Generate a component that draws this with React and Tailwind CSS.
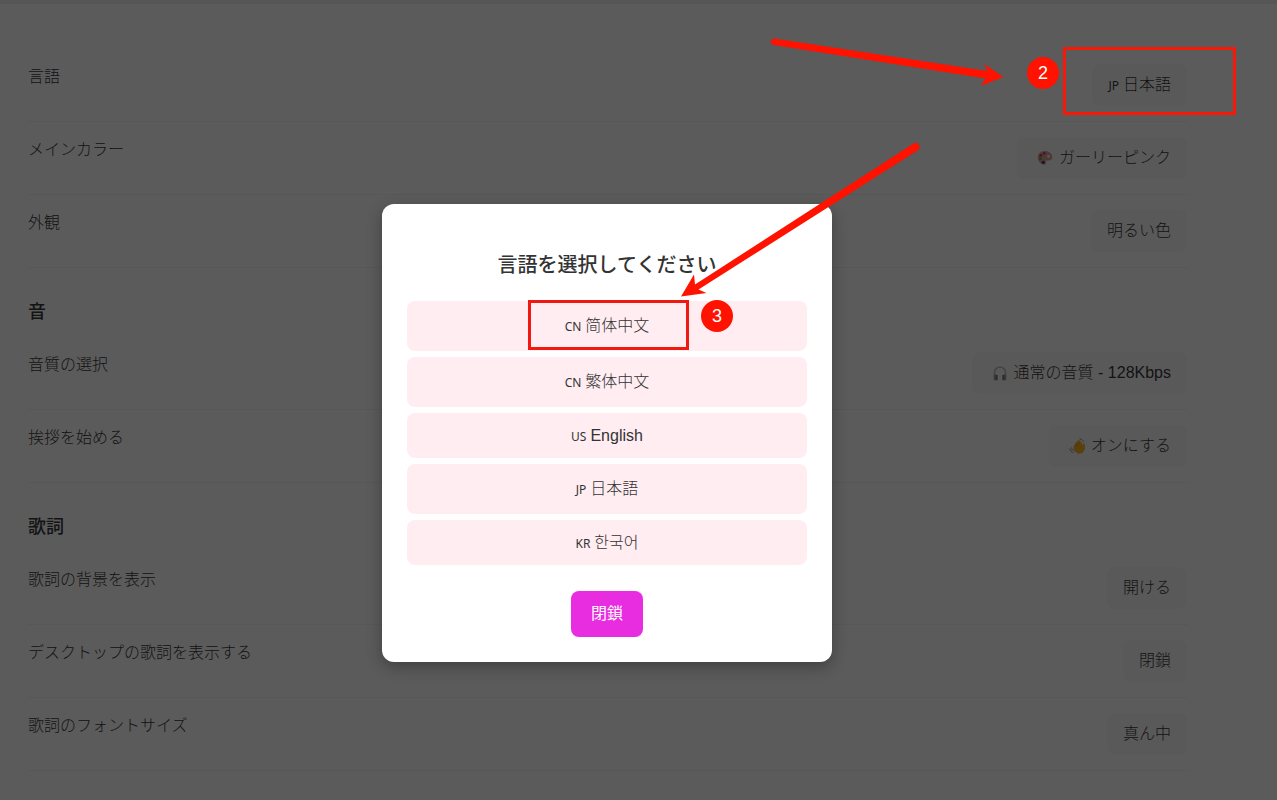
import React, { useState } from 'react';

const PaletteIcon = () => (
    <svg viewBox="0 0 16 16" className="w-4 h-4" aria-hidden="true">
        <path d="M8 1C3.600 1 .8 3.900 .8 7.600c0 4 3 7.200 6.400 7.200 1.700 0 2-1 1.600-2.200-.4-1.300.3-2.400 1.800-2.200 2.600.3 4.700-.6 4.700-3.200C15.300 3.600 12 1 8 1z" fill="#c98f85" />
        <circle cx="11.600" cy="6.500" r="1.400" fill="#e8d5d0" />
        <circle cx="7.200" cy="3.400" r="1.400" fill="#5a4fc0" />
        <circle cx="3.800" cy="5.400" r="1.400" fill="#d02424" />
        <circle cx="3.400" cy="8.800" r="1.400" fill="#2c9a50" />
        <circle cx="6.300" cy="12.200" r="1.500" fill="#2b2c8c" />
    </svg>
);

const HeadphonesIcon = () => (
    <svg viewBox="0 0 16 16" className="w-4 h-4" aria-hidden="true">
        <path d="M2.500 11V7.500a5.500 5.500 0 0 1 11 0V11" fill="none" stroke="#a5a5a5" strokeWidth="1.500" />
        <rect x="1.800" y="9.500" width="3.200" height="6" rx="1.300" fill="#8a8a8a" />
        <rect x="11" y="9.500" width="3.200" height="6" rx="1.300" fill="#8a8a8a" />
        <path d="M5 10v5M11 10v5" stroke="#4a4a4a" strokeWidth="1" />
    </svg>
);

const WaveIcon = () => (
    <svg viewBox="0 0 16 16" className="w-4 h-4" aria-hidden="true">
        <path
            d="M5.500 8.500 8 4.500M7 8l2.600-5M9 8l2-4.500M11 8l1.400-3M14.800 6v5"
            fill="none"
            stroke="#e0a020"
            strokeWidth="1.700"
            strokeLinecap="round"
        />
        <path d="M4.500 8.500 12 6l2 1 1.600.500V12l-2.400 3.300-4.200.4-3.800-3z" fill="#e0a020" />
        <path d="M7 8.500 8.800 5M9 8.500l1.600-4" stroke="#b07812" strokeWidth=".5" />
        <path d="M.8 10.500c.3 2.200 1.600 3.700 3.700 4M2.500 9.500c.2 1.500.9 2.400 2.200 3M10.500.8c2 .1 3.400 1.200 4 3" fill="none" stroke="#777" strokeWidth=".9" />
    </svg>
);

const CountryCode = ({ children }) => (
    <span className="font-['Noto_Sans'] font-normal text-xs mr-1">{children}</span>
);

const sections = [
    {
        rows: [
            { label: '言語', value: '日本語', code: 'JP' },
            { label: 'メインカラー', value: 'ガーリーピンク', icon: <PaletteIcon /> },
            { label: '外観', value: '明るい色' },
        ],
    },
    {
        title: '音',
        rows: [
            { label: '音質の選択', value: '通常の音質 - 128Kbps', icon: <HeadphonesIcon /> },
            { label: '挨拶を始める', value: 'オンにする', icon: <WaveIcon /> },
        ],
    },
    {
        title: '歌詞',
        rows: [
            { label: '歌詞の背景を表示', value: '開ける' },
            { label: 'デスクトップの歌詞を表示する', value: '閉鎖' },
            { label: '歌詞のフォントサイズ', value: '真ん中' },
        ],
    },
];

const languages = [
    { code: 'CN', name: '简体中文', height: 'h-[50px]' },
    { code: 'CN', name: '繁体中文', height: 'h-[50px]' },
    { code: 'US', name: 'English', height: 'h-[45px]' },
    { code: 'JP', name: '日本語', height: 'h-[50px]' },
    { code: 'KR', name: '한국어', height: 'h-[45px]' },
];

function SettingRow({ row, onClick }) {
    return (
        <div className="flex items-start justify-between py-[15px] border-b border-[#d9d9d9]">
            <span className="leading-[26px]">{row.label}</span>
            <button
                type="button"
                onClick={onClick}
                className="flex items-center h-[42px] px-4 rounded-lg bg-[#dfdfdf]"
            >
                {row.icon && <span className="ml-1 mr-0.5 w-5">{row.icon}</span>}
                <span>
                    {row.code && <CountryCode>{row.code}</CountryCode>}
                    {row.value}
                </span>
            </button>
        </div>
    );
}

function LanguageDialog({ onClose }) {
    return (
        <div className="absolute inset-0 bg-black/60 flex items-start justify-center pt-[204px] pr-[63px]">
            <div
                role="dialog"
                aria-labelledby="language-title"
                className="w-[450px] p-[25px] rounded-xl bg-white text-center shadow-[0_5px_15px_rgba(0,0,0,0.3)]"
            >
                <h3 id="language-title" className="my-5 text-xl leading-8 font-medium">言語を選択してください</h3>
                <div className="flex flex-col gap-1.5">
                    {languages.map((lang) => (
                        <button
                            key={lang.name}
                            type="button"
                            onClick={onClose}
                            className={`${lang.height} w-full rounded-lg bg-[#ffedf2]`}
                        >
                            <CountryCode>{lang.code}</CountryCode>
                            {lang.name}
                        </button>
                    ))}
                </div>
                <button
                    type="button"
                    onClick={onClose}
                    className="mt-[26px] h-[46px] px-5 rounded-lg bg-[#e82ce0] text-white font-normal align-top"
                >
                    閉鎖
                </button>
            </div>
        </div>
    );
}

// Numbered hints drawn over the page
function Hints() {
    return (
        <div className="absolute inset-0 pointer-events-none text-white text-lg leading-8 text-center">
            <div className="absolute left-[1063px] top-[47px] w-[173px] h-[68px] border-3 border-[#f81808]" />
            <div className="absolute left-[528px] top-[300px] w-[161px] h-[50px] border-3 border-[#f01810]" />
            <span className="absolute left-[1027px] top-[57px] size-8 rounded-full bg-[#ff1200]">2</span>
            <span className="absolute left-[701px] top-[300px] size-8 rounded-full bg-[#ff1200]">3</span>
            <svg className="absolute left-0 top-0" width="1277" height="800" fill="#ff1200" aria-hidden="true">
                <path d="M774.500 38.500 987.500 71 984 64 1003.500 77 980.500 86 985.500 78.500 773.500 45a3.300 3.300 0 0 1 1-6.500z" />
                <path d="M913.500 143.500 695 284.500 694 274.500 681 296.500 706.500 293 698.500 289.500 917.500 150.500a4 4 0 0 0-4-7z" />
            </svg>
        </div>
    );
}

function App() {
    const [open, setOpen] = useState(true);

    return (
        <div
            lang="ja"
            className="relative min-h-screen overflow-hidden bg-[#e4e4e4] text-base font-light text-[#333] font-['Liberation_Sans','Noto_Sans_CJK_JP','Noto_Sans_CJK_KR',sans-serif]"
        >
            <main className="border-t-4 border-[#d8d8d8] pl-7 pr-[90px] pt-[45px] pb-7">
                {sections.map((section, i) => (
                    <section key={i}>
                        {section.title && (
                            <h2 className="pt-7 pb-[9px] text-lg leading-8 font-medium">{section.title}</h2>
                        )}
                        {section.rows.map((row) => (
                            <SettingRow key={row.label} row={row} onClick={() => setOpen(true)} />
                        ))}
                    </section>
                ))}
            </main>
            {open && <LanguageDialog onClose={() => setOpen(false)} />}
            <Hints />
        </div>
    );
}

export default App;
